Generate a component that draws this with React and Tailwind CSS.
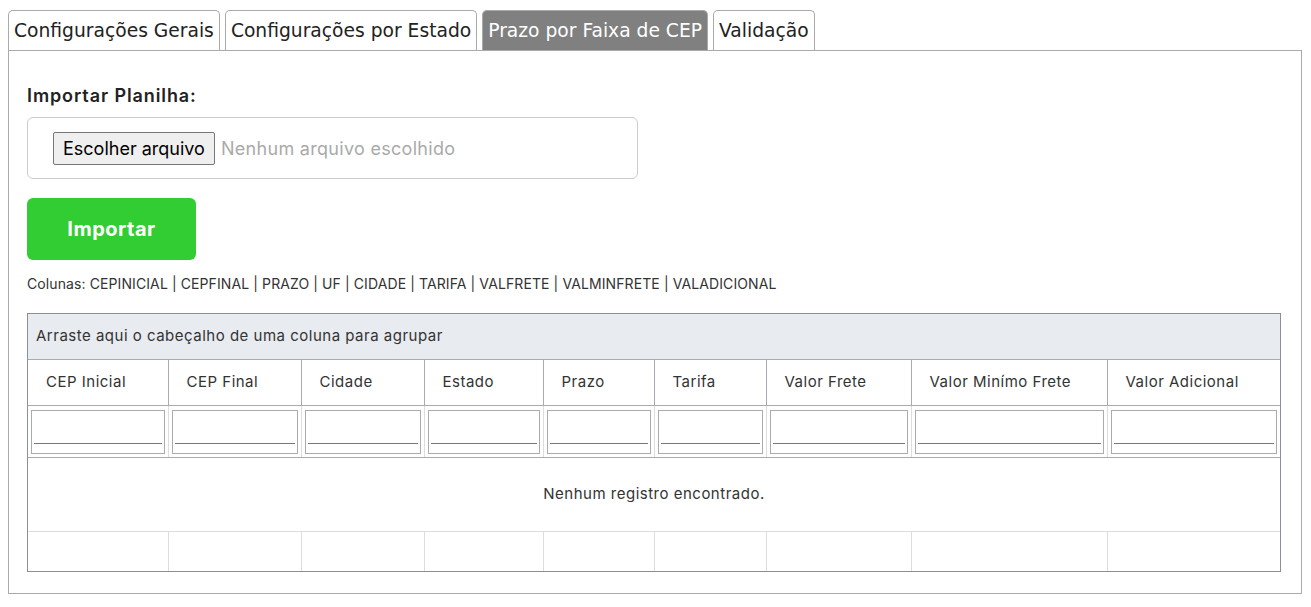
import React from 'react';

const tabs = ['Configurações Gerais', 'Configurações por Estado', 'Prazo por Faixa de CEP', 'Validação'];

const columns = [
    { label: 'CEP Inicial', w: 'w-[140px]' },
    { label: 'CEP Final', w: 'w-[133px]' },
    { label: 'Cidade', w: 'w-[123px]' },
    { label: 'Estado', w: 'w-[119px]' },
    { label: 'Prazo', w: 'w-[111px]' },
    { label: 'Tarifa', w: 'w-[112px]' },
    { label: 'Valor Frete', w: 'w-[145px]' },
    { label: 'Valor Minímo Frete', w: 'w-[196px]' },
    { label: 'Valor Adicional', w: 'w-[173px]' },
];

const App = () => {
    return (
        <div className="bg-white w-[1311px] h-[607px] pt-[10px] pl-2 pr-[9px] font-['Inter',sans-serif] text-[#333]">
            {/* tabs */}
            <div className="flex gap-[5px] h-10 font-['DejaVu_Sans',sans-serif] text-[18.7px]">
                {tabs.map((t, i) => (
                    <div
                        key={t}
                        className={
                            i === 2
                                ? 'px-[5px] pt-[6px] rounded-t-[5px] border border-[#aaa] border-b-0 bg-[#808080] text-white'
                                : 'px-[5px] pt-[6px] rounded-t-[5px] border border-[#aaa] border-b-0 bg-white text-[#222]'
                        }
                    >
                        {t}
                    </div>
                ))}
            </div>

            {/* panel */}
            <div className="border border-[#aaa] h-[544px] px-[18px] pt-[33px]">
                <div className="text-[18px] tracking-[0.9px] font-semibold text-[#222] leading-6">Importar Planilha:</div>

                <div className="mt-[9px] w-[611px] h-[62px] border border-[#ccc] rounded-[6px] flex items-center pl-[25px]">
                    <button className="h-[33px] px-[9px] bg-[#efefef] border border-[#767676] rounded-[2px] text-[18px] text-black">
                        Escolher arquivo
                    </button>
                    <span className="ml-[6px] text-[18px] tracking-[0.3px] text-[#aaa]">Nenhum arquivo escolhido</span>
                </div>

                <button className="mt-[19px] w-[169px] h-[62px] rounded-[6px] bg-[#32cd32] text-white text-[20px] tracking-[0.5px] font-bold">
                    Importar
                </button>

                <div className="mt-[14px] text-[14px] tracking-[0.1px] leading-5 text-[#333]">
                    Colunas: CEPINICIAL | CEPFINAL | PRAZO | UF | CIDADE | TARIFA | VALFRETE | VALMINFRETE | VALADICIONAL
                </div>

                {/* grid */}
                <div className="mt-[19px] w-[1254px] border border-[#8c9096] text-[15px] tracking-[0.5px]">
                    <div className="h-[46px] bg-[#e8ebef] flex items-center pl-[8px] border-b border-[#a8abb0]">
                        Arraste aqui o cabeçalho de uma coluna para agrupar
                    </div>
                    <table className="w-full table-fixed border-collapse">
                        <thead>
                            <tr className="h-[45.5px]">
                                {columns.map((c, i) => (
                                    <th
                                        key={c.label}
                                        className={`${c.w} text-left font-normal pl-[18px] border-b border-[#a8abb0] ${i > 0 ? 'border-l border-l-[#a8abb0]' : ''}`}
                                    >
                                        {c.label}
                                    </th>
                                ))}
                            </tr>
                            <tr className="h-[52px]">
                                {columns.map((c, i) => (
                                    <th
                                        key={c.label}
                                        className={`px-[3px] py-[3px] border-b border-[#a8abb0] ${i > 0 ? 'border-l border-l-[#ddd]' : ''}`}
                                    >
                                        <div className="h-[44px] border border-[#a8abb0] px-[2px] pt-[2px]">
                                            <div className="h-[31px] border-b border-[#777]" />
                                        </div>
                                    </th>
                                ))}
                            </tr>
                        </thead>
                        <tbody>
                            <tr className="h-[74px]">
                                <td colSpan={9} className="text-center border-b border-[#ddd]">
                                    Nenhum registro encontrado.
                                </td>
                            </tr>
                            <tr className="h-[39px]">
                                {columns.map((c, i) => (
                                    <td key={c.label} className={i > 0 ? 'border-l border-[#ddd]' : ''} />
                                ))}
                            </tr>
                        </tbody>
                    </table>
                </div>
            </div>
        </div>
    );
};

export default App;
